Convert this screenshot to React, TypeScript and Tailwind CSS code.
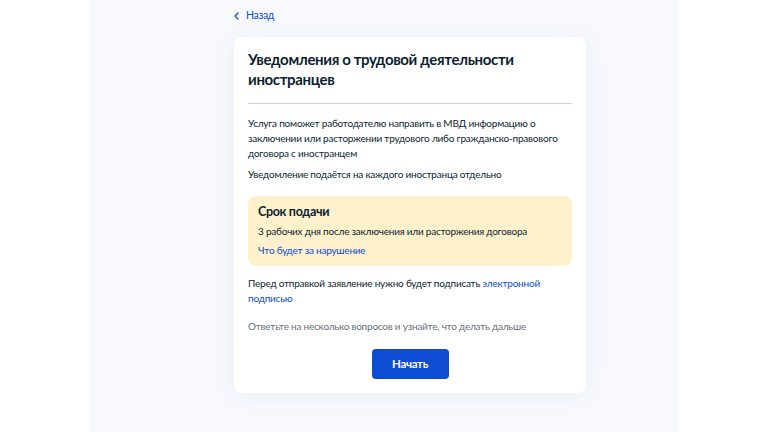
import React from 'react';

const App: React.FC = () => {
  return (
    <div className="w-full h-[432px] bg-white flex justify-center font-['Lato','Noto_Sans',sans-serif] text-[#0b1f33]">
      {/* Page panel */}
      <div className="w-[588px] h-full bg-[#f7f9fd] flex flex-col pl-[144px] pr-[92px] pt-[1px]">
        <div className="w-[352px] flex flex-col">
          {/* Back link */}
          <a className="flex items-center gap-[5px] h-[30px] text-[10.5px] tracking-[-0.3px] text-[#0d4cd3] cursor-pointer">
            <svg width="5" height="8" viewBox="0 0 5 8" fill="none" stroke="currentColor" strokeWidth="1.4" strokeLinecap="round" strokeLinejoin="round">
              <path d="M4 1L1 4l3 3" />
            </svg>
            <span className="ml-[2px]">Назад</span>
          </a>

          {/* Card */}
          <div className="mt-[6px] bg-white rounded-lg shadow-[0_2px_24px_rgba(40,90,160,0.07)] px-[14px] pt-[12px] pb-[14px] flex flex-col">
            <h1 className="text-[15px] leading-[20px] font-bold tracking-[-0.35px] pr-[40px]">
              Уведомления о трудовой деятельности иностранцев
            </h1>
            <div className="mt-[14px] h-px bg-[#c9d0e0]" />

            <div className="text-[10px] leading-[15px] tracking-[-0.22px] flex flex-col">
              <p className="mt-[12px]">
                Услуга поможет работодателю направить в МВД информацию о заключении или расторжении трудового либо
                гражданско-правового договора с иностранцем
              </p>
              <p className="mt-[6px]">Уведомление подаётся на каждого иностранца отдельно</p>

              {/* Deadline box */}
              <div className="mt-[14px] bg-[#fff1cc] rounded-lg px-[10px] pt-[8px] pb-[8px] flex flex-col leading-[16px]">
                <h2 className="text-[12.5px] font-bold tracking-[-0.3px]">Срок подачи</h2>
                <p className="mt-[3px]">3 рабочих дня после заключения или расторжения договора</p>
                <a className="mt-[3px] text-[#0d4cd3] cursor-pointer">Что будет за нарушение</a>
              </div>

              <p className="mt-[10px]">
                Перед отправкой заявление нужно будет подписать <a className="text-[#0d4cd3] cursor-pointer">электронной</a>
                <br />
                <a className="text-[#0d4cd3] cursor-pointer">подписью</a>
              </p>

              <p className="mt-[13px] text-[#66727f]">
                Ответьте на несколько вопросов и узнайте, что делать дальше
              </p>
            </div>

            <div className="mt-[15px] flex justify-center">
              <button className="w-[77px] h-[30px] rounded-[4px] bg-[#0d4cd3] text-white text-[11.5px] font-bold tracking-[-0.3px] cursor-pointer">
                Начать
              </button>
            </div>
          </div>
        </div>
      </div>
    </div>
  );
};

export default App;
